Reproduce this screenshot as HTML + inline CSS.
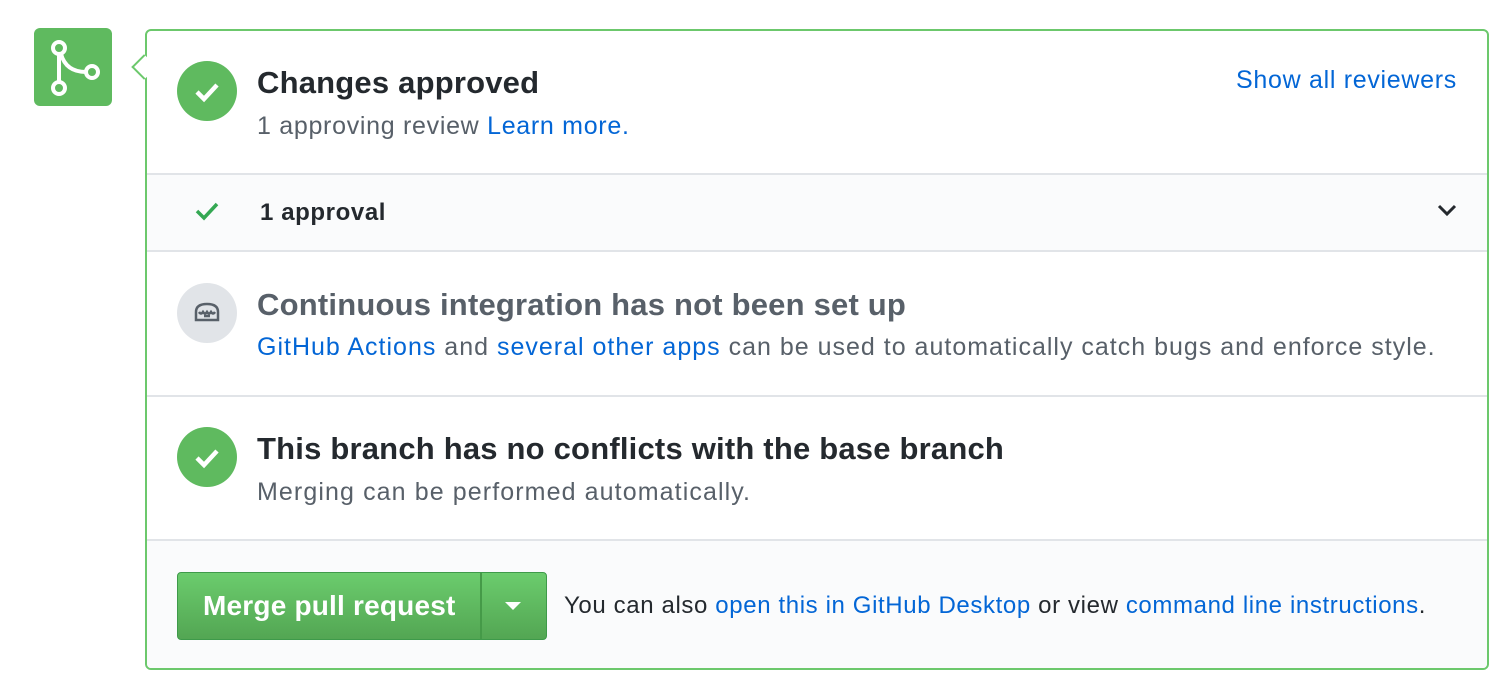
<!DOCTYPE html>
<html><head><style>
body{margin:0;background:#fff;font-family:"Liberation Sans",sans-serif;width:1512px;height:692px;position:relative;overflow:hidden}
.ic{position:absolute;left:34px;top:28px;width:78px;height:78px;background:#5fba5f;border-radius:6px}
.box{position:absolute;left:145px;top:29px;width:1340px;height:637px;border:2px solid #6cc86c;border-radius:6px;overflow:hidden}
.tip{position:absolute;left:135px;top:58px;width:16px;height:16px;background:#fff;border-left:2px solid #6cc86c;border-bottom:2px solid #6cc86c;transform:rotate(45deg);z-index:2}
.sec{position:absolute;left:0;width:1340px;border-bottom:2px solid #e1e4e8}
.circ{position:absolute;left:30px;width:60px;height:60px;border-radius:50%;background:#5fba5f}
.t{position:absolute;left:110px;font-size:31px;font-weight:bold;color:#24292e;letter-spacing:0.2px}
.s{position:absolute;left:110px;font-size:25px;letter-spacing:1px;color:#586069}
a{color:#0366d6;text-decoration:none}
</style></head><body>
<div class="ic"><svg width="78" height="78" viewBox="0 0 78 78" fill="none" stroke="#fff" stroke-width="4"><circle cx="25" cy="20" r="6"/><circle cx="25" cy="60" r="6"/><circle cx="58" cy="44" r="6"/><path d="M25 26V54M27 26Q32 44 52 44"/></svg></div>
<div class="tip"></div>
<div class="box">
<div class="sec" style="top:0;height:142px">
<div class="circ" style="top:30px"><svg width="60" height="60"><path d="M20 31l7 7 13-14" stroke="#fff" stroke-width="4.5" fill="none"/></svg></div>
<div class="t" style="top:34px">Changes approved</div>
<div class="s" style="top:81px;letter-spacing:0.7px">1 approving review <a>Learn more.</a></div>
<div style="position:absolute;right:30px;top:35px;font-size:25px;letter-spacing:0.7px"><a>Show all reviewers</a></div>
</div>
<div class="sec" style="top:144px;height:75px;background:#fafbfc">
<svg style="position:absolute;left:47px;top:25px" width="26" height="22"><path d="M3 11l7 7L23 4" stroke="#34a853" stroke-width="3.5" fill="none"/></svg>
<div style="position:absolute;left:113px;top:24px;font-size:24px;letter-spacing:0.6px;font-weight:bold;color:#24292e">1 approval</div>
<svg style="position:absolute;right:30px;top:28px" width="20" height="14"><path d="M2 3l8 8 8-8" stroke="#24292e" stroke-width="3" fill="none"/></svg>
</div>
<div class="sec" style="top:221px;height:143px">
<div class="circ" style="top:31px;background:#e1e4e8"><svg width="60" height="60" fill="none" stroke="#586069" stroke-width="2.5"><path d="M19 37V29q0-8 11-8t11 8v8z"/><path d="M22 29q2 3 4 0q2 3 4 0q2 3 4 0q2 3 4 0M27 33h6"/></svg></div>
<div class="t" style="top:35px;color:#586069">Continuous integration has not been set up</div>
<div class="s" style="top:81px"><a>GitHub Actions</a> and <a>several other apps</a> can be used to automatically catch bugs and enforce style.</div>
</div>
<div class="sec" style="top:366px;height:142px">
<div class="circ" style="top:30px"><svg width="60" height="60"><path d="M20 31l7 7 13-14" stroke="#fff" stroke-width="4.5" fill="none"/></svg></div>
<div class="t" style="top:34px">This branch has no conflicts with the base branch</div>
<div class="s" style="top:81px;letter-spacing:1.1px">Merging can be performed automatically.</div>
</div>
<div style="position:absolute;top:510px;left:0;width:1340px;height:130px;background:#fafbfc">
<div style="position:absolute;left:30px;top:31px;width:368px;height:66px;border:1px solid #3e9a4a;border-radius:4px;background:linear-gradient(#6bcc6d,#53a653);color:#fff;font-size:28px;font-weight:bold">
<div style="position:absolute;left:25px;top:17px;letter-spacing:0.2px">Merge pull request</div>
<div style="position:absolute;left:302px;top:0;width:2px;height:66px;background:#459a48"></div>
<svg style="position:absolute;left:326px;top:28px" width="18" height="10"><path d="M1 1h16L9 9z" fill="#fff"/></svg>
</div>
<div style="position:absolute;left:417px;top:51px;font-size:24px;letter-spacing:0.62px;color:#24292e">You can also <a>open this in GitHub Desktop</a> or view <a>command line instructions</a>.</div>
</div>
</div>
</body></html>
